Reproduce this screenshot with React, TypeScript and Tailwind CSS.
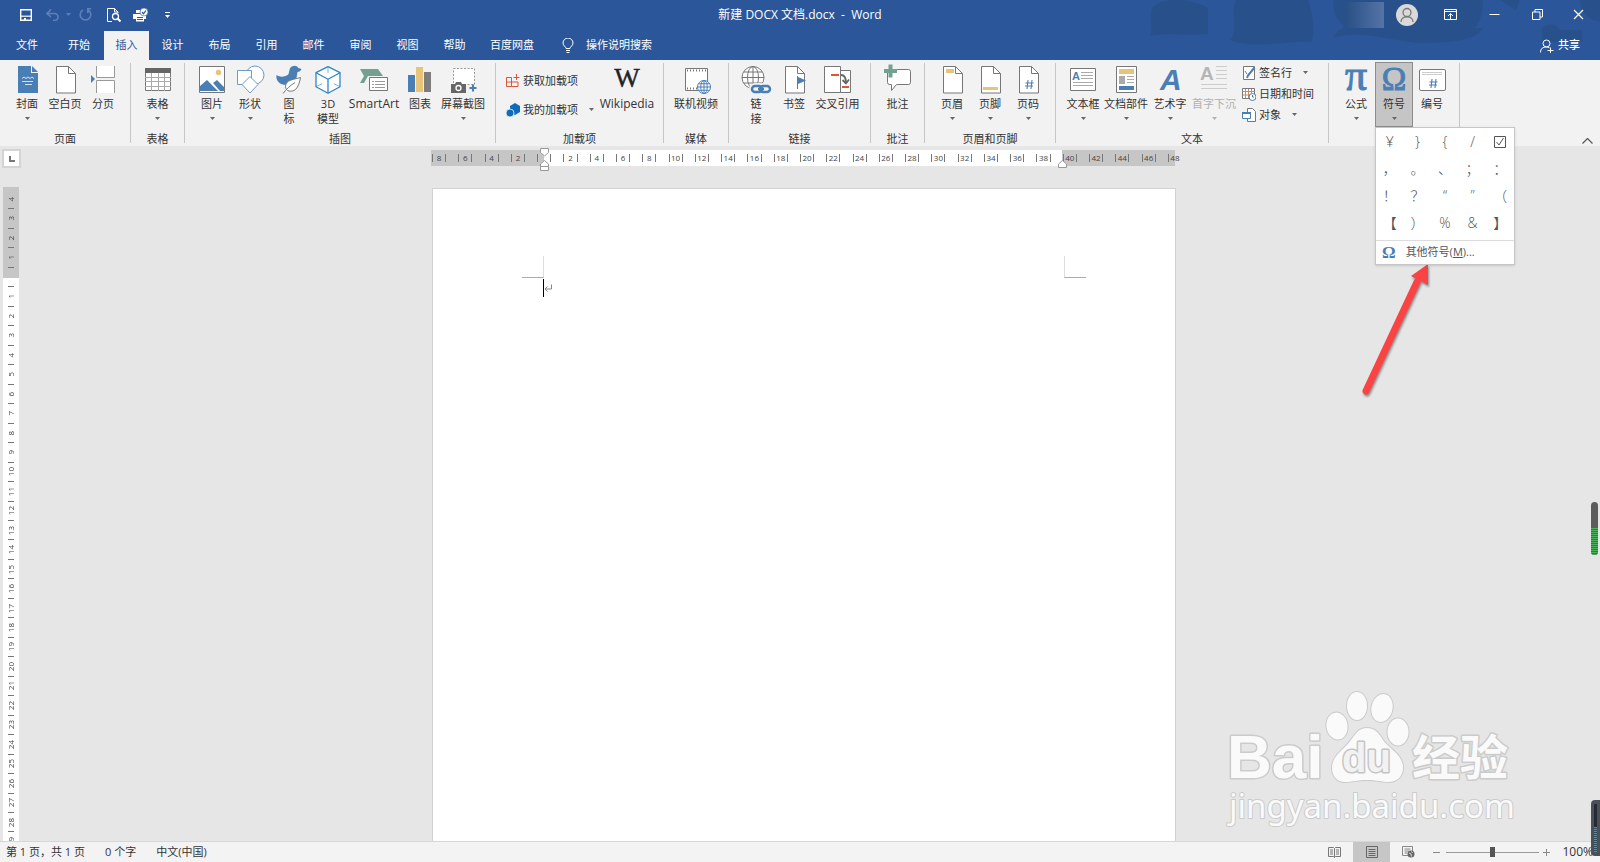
import type { ReactNode } from 'react'
import clsx from 'clsx'

const BLUE = '#4a7fb5'
const GRAY = '#777777'
const GOLD = '#e8c478'
const RED = '#d9563a'

const tabs = ['插入', '设计', '布局', '引用', '邮件', '审阅', '视图', '帮助']

const symbols = [
  '¥', '}', '{', '/', '☑',
  '，', '。', '、', '；', '：',
  '！', '？', '“', '”', '（',
  '【', '）', '%', '&', '】',
]

function Caret({ className }: { className?: string }) {
  return (
    <svg viewBox="0 0 5 3" className={clsx('h-[3px] w-[5px] shrink-0', className)}>
      <path d="M0 0h5L2.5 3z" fill="currentColor" />
    </svg>
  )
}

function Icon({ children }: { children: ReactNode }) {
  return (
    <svg viewBox="0 0 32 28" className="h-7 w-8 shrink-0 overflow-visible" fill="none">
      {children}
    </svg>
  )
}

function Sheet() {
  return (
    <>
      <path d="M7.5.5h12l7 7v19.500h-19z" fill="#fff" stroke={GRAY} />
      <path d="M19.5.5v7h7" stroke={GRAY} />
    </>
  )
}

function Globe({ x, y, r, color }: { x: number; y: number; r: number; color: string }) {
  return (
    <g stroke={color} transform={`translate(${x} ${y})`}>
      <circle r={r} fill="#fff" />
      <ellipse rx={r / 2} ry={r} />
      <path d={`M0 ${-r}V${r}M${-r} 0H${r}M${-r * 0.85} ${-r * 0.5}H${r * 0.85}M${-r * 0.85} ${r * 0.5}H${r * 0.85}`} />
    </g>
  )
}

const icons: Record<string, ReactNode> = {
  cover: (
    <>
      <path d="M7 0h13v7h7v20H7z" fill={BLUE} />
      <path d="M21 0l6 6h-6z" fill={BLUE} />
      <path d="M11 12.500l2-1.500 2 1.500 2-1.500 2 1.500 2-1.500 2 1.500" stroke="#fff" strokeWidth=".8" />
      <path d="M11 15.500h11M14 18.500h7" stroke="#cfe0ef" />
    </>
  ),
  blank: <Sheet />,
  pageBreak: (
    <>
      <path d="M9 0h19v11H9zM9 14h19v13H9z" fill="#fff" />
      <path d="M9.500 0v11.500h18V0M9.500 27V14.500h18V27" stroke="#999" />
      <path d="M4 9l4 4-4 4z" fill={BLUE} />
    </>
  ),
  table: (
    <>
      <path d="M3.500 2.500h25v22h-25z" fill="#fff" stroke={GRAY} />
      <path d="M3 2h26v5H3z" fill="#666" />
      <path d="M9.500 7v18M16.500 7v18M22.500 7v18M3 11.500h26M3 15.500h26M3 20.500h26" stroke="#aaa" />
    </>
  ),
  picture: (
    <>
      <path d="M3.500.5h25v26h-25z" fill="#fff" stroke={GRAY} />
      <circle cx="22.500" cy="6.500" r="2.700" fill={GOLD} />
      <path d="M4 25v-5l7-6 11 11zM17 17l4-3 7 7v4h-4z" fill={BLUE} />
    </>
  ),
  shapes: (
    <>
      <circle cx="21" cy="9" r="9" fill="#fff" stroke="#6c9bc9" />
      <path d="M3.500 4.500h14v14h-14z" fill="#fff" stroke="#6c9bc9" />
      <path d="M16 10.500l8 8-8 8.500-8-8.500z" fill="#fff" stroke="#6c9bc9" />
    </>
  ),
  icons: (
    <>
      <path d="M3.500 9c3 2 6 2 9 1 4-1 3-3 4-6a5 5 0 0 1 9-2l3 1c-1 2-2 3-4 3-1 4 0 13-11 13C7 19 2.500 15 3.500 9z" fill={BLUE} />
      <path d="M27.500 11.500c-6 2-15 2-15 9 0 5 6 6 10 3 3-3 4-7 5-12z" fill="#fff" stroke={GRAY} />
      <path d="M10 27.500c3-4 7-8 12-11" stroke={GRAY} />
    </>
  ),
  cube: (
    <g stroke="#2f86c6" strokeWidth="1.300" strokeLinejoin="round">
      <path d="M16 .7l12 6v14l-12 6.500-12-6.500v-14z" fill="#fff" />
      <path d="M4 6.700l12 6.500 12-6.500M16 13.200v14" />
      <path d="M16 1v6M4 20.700l6-3M28 20.700l-6-3" strokeWidth=".6" />
    </g>
  ),
  smartart: (
    <>
      <path d="M2 3h18l5 7H10l-4 7H2l4-7z" fill="#72a28f" />
      <path d="M11.500 11.500h18v13h-18z" fill="#fff" stroke={GRAY} />
      <path d="M14 15.500h2M17 15.500h10M14 18.500h2M17 18.500h10M14 21.500h2M17 21.500h10" stroke="#999" />
    </>
  ),
  chart: (
    <>
      <path d="M4 9h7v17H4z" fill={BLUE} />
      <path d="M12 1h7v25h-7z" fill={GOLD} />
      <path d="M20 6h7v20h-7z" fill="#7d7d7d" />
    </>
  ),
  screenshot: (
    <>
      <path d="M6.500 2.500h21v16h-21z" fill="#fff" stroke="#999" strokeDasharray="2 1.500" />
      <path d="M4 18h4l1-2h5l1 2h4v9H4z" fill="#666" />
      <circle cx="11.500" cy="22" r="2.500" stroke="#fff" strokeWidth="1.300" />
      <path d="M26 18.500v7M22.500 22h7" stroke={BLUE} strokeWidth="2" />
    </>
  ),
  video: (
    <>
      <path d="M5.500 2.500h22v22h-22z" fill="#fff" stroke={GRAY} />
      <path d="M7 4.500h20M7 22.500h11" stroke={GRAY} strokeWidth="2" strokeDasharray="1 2" />
      <Globe x={24} y={21} r={6.5} color={BLUE} />
    </>
  ),
  link: (
    <>
      <Globe x={13} y={11.5} r={11} color={GRAY} />
      <g stroke="#f2f2f2" strokeWidth="6">
        <rect x="12" y="20" width="10" height="6" rx="3" />
        <rect x="20" y="20" width="10" height="6" rx="3" />
      </g>
      <g stroke={BLUE} strokeWidth="2.500">
        <rect x="12" y="20" width="10" height="6" rx="3" />
        <rect x="20" y="20" width="10" height="6" rx="3" />
        <path d="M18 23h6" />
      </g>
    </>
  ),
  bookmark: (
    <>
      <Sheet />
      <path d="M19.500 10v13" stroke={BLUE} />
      <path d="M20 11l8 3.500-8 3.500z" fill={BLUE} />
    </>
  ),
  crossRef: (
    <>
      <path d="M13.500 4.500h15v22h-15z" fill="#fff" stroke={GRAY} />
      <path d="M2.500.5h16v26h-16z" fill="#fff" stroke={GRAY} />
      <path d="M9 9h8M20 21h7" stroke={RED} strokeWidth="2" />
      <path d="M19 9c4 0 5 3 5 8M20.500 14l3.500 3.500 3-4" stroke="#666" strokeWidth="1.800" />
    </>
  ),
  comment: (
    <>
      <path d="M6.500 3.500h20q2 0 2 2v11q0 2-2 2h-12l-5 6v-6h-2q-2 0-2-2v-11z" fill="#fff" stroke={GRAY} />
      <path d="M8.500-1.500v13M2 5h13" stroke="#72a28f" strokeWidth="4" />
    </>
  ),
  header: (
    <>
      <Sheet />
      <path d="M10 3h8v4h-8z" fill={GOLD} />
    </>
  ),
  footer: (
    <>
      <Sheet />
      <path d="M9 21h15v3H9z" fill={GOLD} />
    </>
  ),
  pageNumber: (
    <>
      <Sheet />
      <path d="M16 14l-1 9M20 14l-1 9M13.500 17h8M13 20h8" stroke={BLUE} strokeWidth="1.100" />
    </>
  ),
  textBox: (
    <>
      <path d="M3.500 2.500h25v22h-25z" fill="#fff" stroke={GRAY} />
      <text x="5" y="14" fontSize="11" fontWeight="700" fill={BLUE} fontFamily="Liberation Sans">A</text>
      <path d="M14 6.500h12M14 9.500h12M14 12.500h12M6 16.500h20M6 19.500h20" stroke="#aaa" />
    </>
  ),
  quickParts: (
    <>
      <path d="M6.500.5h20v26h-20z" fill="#fff" stroke={GRAY} />
      <path d="M9 3h15v5H9z" fill={GOLD} />
      <path d="M9 10h6v8H9z" fill="#aaa" />
      <path d="M17 10.500h7M17 13.500h7M17 16.500h7" stroke="#aaa" />
      <path d="M9 20h15v4H9z" fill={BLUE} />
    </>
  ),
  wordArt: (
    <text x="6" y="24" fontSize="30" fontWeight="700" fontStyle="italic" fill={BLUE} fontFamily="Liberation Sans">A</text>
  ),
  dropCap: (
    <>
      <text x="2" y="14" fontSize="19" fontWeight="700" fill="#b5b5b5" fontFamily="Liberation Sans">A</text>
      <path d="M18 .5h11M18 4.500h11M18 8.500h11M18 12.500h11M3 18.500h26M3 22.500h26" stroke="#ccc" />
    </>
  ),
  equation: (
    <text x="16" y="24" fontSize="44" textAnchor="middle" fill={BLUE} stroke={BLUE} strokeWidth="1" fontFamily="Liberation Serif">π</text>
  ),
  omega: (
    <text x="16" y="24" fontSize="33" textAnchor="middle" fill={BLUE} stroke={BLUE} strokeWidth="1" fontFamily="Liberation Serif">Ω</text>
  ),
  number: (
    <>
      <rect x="3.500" y="3.500" width="26" height="21" rx="1.500" fill="#fff" stroke={GRAY} />
      <path d="M6 6.500h20M6 8.500h20" stroke="#ccc" />
      <path d="M16 13l-1 9M20 13l-1 9M13.500 16h8M13 19h8" stroke={BLUE} strokeWidth="1.100" />
    </>
  ),
  wikipedia: (
    <text x="16" y="21" fontSize="27" textAnchor="middle" fill="#222" stroke="#222" strokeWidth=".4" fontFamily="Liberation Serif">W</text>
  ),
}

type ToolProps = {
  icon: string
  label: string
  width: string
  menu?: boolean
  disabled?: boolean
  active?: boolean
}

function Tool({ icon, label, width, menu, disabled, active }: ToolProps) {
  const latin = /^[A-Za-z]+$/.test(label)
  return (
    <button
      type="button"
      disabled={disabled}
      className={clsx(
        'flex h-[65px] flex-col items-center pt-1',
        width,
        active && 'bg-[#c5c5c5] outline -outline-offset-1 outline-[#8c8c8c]',
        disabled ? 'text-[#b1b1b1]' : 'text-[#333]',
      )}
    >
      <Icon>{icons[icon]}</Icon>
      <span className={clsx('mt-0.5 whitespace-pre leading-[15px]', latin ? 'text-[12px]' : 'text-[11px]')}>{label}</span>
      {menu && <Caret className={clsx('mt-1.5', !disabled && 'text-[#666]')} />}
    </button>
  )
}

function Group({ label, children }: { label: string; children: ReactNode }) {
  return (
    <>
      <section aria-label={label || '符号'} className="flex flex-col px-2 pt-0.5">
        <div className="flex">{children}</div>
        <div className="mt-1 text-center text-[11px] leading-[15px] text-[#333]">{label}</div>
      </section>
      <div className="my-[3px] w-px shrink-0 bg-[#c6c6c6]" />
    </>
  )
}

function SmallTool({ icon, label, menu }: { icon: ReactNode; label: string; menu?: boolean }) {
  return (
    <button type="button" className="flex items-center gap-[3px] pl-0.5 text-[11px] leading-[15px] whitespace-nowrap text-[#333]">
      <svg viewBox="0 0 14 14" className="size-3.5 shrink-0" fill="none">
        {icon}
      </svg>
      {label}
      {menu && <Caret className="ml-2 text-[#666]" />}
    </button>
  )
}

function SymbolMenu() {
  return (
    <div className="absolute top-[65px] left-0 z-20 w-[140px] border border-[#c6c6c6] bg-white shadow-sm">
      <div className="grid grid-cols-5 pb-1">
        {symbols.map((s) => (
          <button
            key={s}
            type="button"
            className="flex h-[27px] items-center justify-center font-['Open_Sans','Noto_Sans_CJK_SC',sans-serif] text-[14px] font-light text-[#555]"
          >
            {s === '☑' ? (
              <svg viewBox="0 0 12 12" className="size-3" fill="none" stroke="#555">
                <path d="M.5.5h11v11H.5z" />
                <path d="M2.500 6l2.500 3 4.500-7" />
              </svg>
            ) : (
              s
            )}
          </button>
        ))}
      </div>
      <button type="button" className="flex h-6 w-full items-center gap-2.5 border-t border-[#dcdcdc] pl-1.5 text-[11px] text-[#555]">
        <span className="font-['Liberation_Serif',serif] text-[17px] leading-none font-bold text-[#4a7fb5]">Ω</span>
        <span>其他符号(<u>M</u>)...</span>
      </button>
    </div>
  )
}

function TitleBar() {
  return (
    <div className="relative grid h-[31px] grid-cols-[1fr_auto_1fr] items-center pb-0.5 text-white">
      <div className="flex items-center pl-5">
        <button type="button" aria-label="保存" className="mr-3.5">
          <svg viewBox="0 0 12 12" className="size-3" fill="none" stroke="#fff" strokeWidth="1.400">
            <path d="M.7.7h10.600v10.600H.7z" />
            <path d="M1 7.200h10" strokeWidth="1.200" />
            <path d="M5 11V9" strokeWidth="2" />
          </svg>
        </button>
        <button type="button" aria-label="撤消" className="mr-2 flex items-center gap-1.5 text-[#5c80b8]">
          <svg viewBox="0 0 14 12" className="h-3 w-3.5" fill="none" stroke="currentColor" strokeWidth="1.600">
            <path d="M5 .5L1 4.500l4 3.500M1 4.500h7.500a3.300 3.300 0 0 1 0 7H7" />
          </svg>
          <Caret />
        </button>
        <button type="button" aria-label="重复" className="mr-[15px] text-[#5c80b8]">
          <svg viewBox="0 0 13 13" className="size-[13px]" fill="none" stroke="currentColor" strokeWidth="1.600">
            <path d="M9 2a5.300 5.300 0 1 1-5 0M8 .8h4.200M8.800 1v4" />
          </svg>
        </button>
        <button type="button" aria-label="打印预览" className="mr-3">
          <svg viewBox="0 0 14 14" className="size-3.5" fill="none" stroke="#fff">
            <path d="M5 13.500H.5V.5h7l3.500 3.500v1M7.500.5v3.500H11" />
            <circle cx="8.500" cy="8.500" r="3" strokeWidth="1.300" />
            <path d="M10.500 10.500l3 3" strokeWidth="2" />
          </svg>
        </button>
        <button type="button" aria-label="快速打印" className="mr-[17px]">
          <svg viewBox="0 0 15 14" className="h-3.5 w-[15px]" fill="none">
            <path d="M0 6h13v5h-2v2.500H3V11H0zM3 2h4v3H3z" fill="#fff" />
            <path d="M4 9.500h6M4 11.500h6" stroke="#2b579a" />
            <circle cx="11" cy="4" r="4" fill="#fff" stroke="#2b579a" strokeWidth=".6" />
            <path d="M9 4l1.500 1.700L13 2.500" stroke="#2b579a" strokeWidth="1.200" />
          </svg>
        </button>
        <button type="button" aria-label="自定义快速访问工具栏" className="flex flex-col items-center gap-0.5">
          <span className="h-px w-[5px] bg-white" />
          <Caret />
        </button>
      </div>
      <h1 className="text-[12px] whitespace-pre">{'新建 DOCX 文档.docx  -  Word'}</h1>
      <div className="flex items-center justify-end">
        <div className="mr-3 h-[26px] w-[38px] bg-linear-to-r from-[#2a5087] to-[#5474a6]" />
        <button type="button" aria-label="帐户" className="mr-6 rounded-full bg-[#d9d9d9]">
          <svg viewBox="0 0 22 22" className="size-[22px]" fill="none" stroke="#777" strokeWidth="1.300">
            <circle cx="11" cy="8.500" r="4" />
            <path d="M5 18c0-7 12-7 12 0" />
          </svg>
        </button>
        <button type="button" aria-label="功能区显示选项" className="flex w-[45px] pl-0.5">
          <svg viewBox="0 0 13 11" className="h-[11px] w-[13px]" fill="none" stroke="#fff">
            <path d="M.5.5h12v10H.5zM.5 2.500h12M6.500 10V4.500M4 7l2.500-2.500L9 7" />
          </svg>
        </button>
        <button type="button" aria-label="最小化" className="flex w-[43px] pl-0.5">
          <svg viewBox="0 0 11 11" className="size-[11px]" stroke="#fff">
            <path d="M.5 5.500h10" />
          </svg>
        </button>
        <button type="button" aria-label="还原" className="flex w-[43px] pl-0.5">
          <svg viewBox="0 0 11 11" className="size-[11px]" fill="none" stroke="#fff">
            <path d="M.5 3h7.500v7.500H.5zM3 3V.5h7.500V8H8" />
          </svg>
        </button>
        <button type="button" aria-label="关闭" className="mr-4 flex">
          <svg viewBox="0 0 11 11" className="size-[11px]" stroke="#fff" strokeWidth="1.200">
            <path d="M1 1l9 9M10 1l-9 9" />
          </svg>
        </button>
      </div>
    </div>
  )
}

function TabRow() {
  return (
    <nav className="relative flex h-[29px] items-stretch text-[11px] text-white">
      <button type="button" className="w-[54px]">文件</button>
      <button type="button" className="w-[50px]">开始</button>
      {tabs.map((tab, i) => (
        <button key={tab} type="button" className={clsx(i === 0 ? 'w-[45px] bg-[#f2f2f2] text-[#2b579a]' : 'w-[47px]')}>
          {tab}
        </button>
      ))}
      <button type="button" className="w-[68px]">百度网盘</button>
      <label className="ml-4 flex items-center gap-3">
        <svg viewBox="0 0 12 15" className="h-[15px] w-3" fill="none" stroke="#fff" role="img" aria-label="操作说明搜索">
          <path d="M4 10.500C4 8.500 1 8 1 5a5 5 0 0 1 10 0c0 3-3 3.500-3 5.500zM4 12.500h4M4.500 14.500h3" />
        </svg>
        <input type="text" placeholder="操作说明搜索" className="w-32 bg-transparent outline-none placeholder:text-white" />
      </label>
      <button type="button" className="mr-5 ml-auto flex items-center gap-1 font-medium">
        <svg viewBox="0 0 14 14" className="size-3.5" fill="none" stroke="#fff">
          <circle cx="6.500" cy="4.500" r="3.500" />
          <path d="M.5 13.500c0-4 2.500-5.500 6-5.500 1 0 2 .2 3 .8M7.500 11.500h6M10.500 8.500v5.500" />
        </svg>
        共享
      </button>
    </nav>
  )
}

function Ribbon() {
  return (
    <div className="relative z-10 flex h-[86px] bg-[#f2f2f2]">
      <Group label="页面">
        <Tool icon="cover" label="封面" width="w-[38px]" menu />
        <Tool icon="blank" label="空白页" width="w-[38px]" />
        <Tool icon="pageBreak" label="分页" width="w-[38px]" />
      </Group>
      <Group label="表格">
        <Tool icon="table" label="表格" width="w-[37px]" menu />
      </Group>
      <Group label="插图">
        <Tool icon="picture" label="图片" width="w-[38px]" menu />
        <Tool icon="shapes" label="形状" width="w-[38px]" menu />
        <Tool icon="icons" label={'图\n标'} width="w-[40px]" />
        <Tool icon="cube" label={'3D\n模型'} width="w-[38px]" />
        <Tool icon="smartart" label="SmartArt" width="w-[54px]" />
        <Tool icon="chart" label="图表" width="w-[38px]" />
        <Tool icon="screenshot" label="屏幕截图" width="w-[48px]" menu />
      </Group>
      <Group label="加载项">
        <div className="flex w-[95px] flex-col gap-3.5 pt-[11px]">
          <SmallTool
            label="获取加载项"
            icon={<path d="M.5 3.500h5v9h-5zM5.500 8h6.500v4.500H5.500M.5 8h5M10.500 0v6M7.500 3.500h6" stroke={RED} />}
          />
          <SmallTool
            label="我的加载项"
            menu
            icon={
              <>
                <path d="M4 3l5-3 5 3v6l-5 3-5-3z" fill="#0f6cbd" />
                <circle cx="4" cy="10" r="4" fill="#0f6cbd" stroke="#f2f2f2" strokeWidth=".8" />
              </>
            }
          />
        </div>
        <Tool icon="wikipedia" label="Wikipedia" width="w-[56px]" />
      </Group>
      <Group label="媒体">
        <Tool icon="video" label="联机视频" width="w-[48px]" />
      </Group>
      <Group label="链接">
        <Tool icon="link" label={'链\n接'} width="w-[38px]" />
        <Tool icon="bookmark" label="书签" width="w-[38px]" />
        <Tool icon="crossRef" label="交叉引用" width="w-[49px]" />
      </Group>
      <Group label="批注">
        <Tool icon="comment" label="批注" width="w-[37px]" />
      </Group>
      <Group label="页眉和页脚">
        <Tool icon="header" label="页眉" width="w-[38px]" menu />
        <Tool icon="footer" label="页脚" width="w-[38px]" menu />
        <Tool icon="pageNumber" label="页码" width="w-[38px]" menu />
      </Group>
      <Group label="文本">
        <Tool icon="textBox" label="文本框" width="w-[38px]" menu />
        <Tool icon="quickParts" label="文档部件" width="w-[48px]" menu />
        <Tool icon="wordArt" label="艺术字" width="w-[40px]" menu />
        <Tool icon="dropCap" label="首字下沉" width="w-[48px]" menu disabled />
        <div className="flex w-[82px] flex-col gap-1.5 pt-[3px] pl-0.5">
          <SmallTool
            label="签名行"
            menu
            icon={
              <>
                <path d="M1.500.5h11v13h-11z" fill="#fff" stroke={GRAY} />
                <path d="M12.500 1.500L6 9.500 5 12" stroke={BLUE} strokeWidth="2" />
                <path d="M3 5l2 3" stroke={GRAY} />
              </>
            }
          />
          <SmallTool
            label="日期和时间"
            icon={
              <>
                <path d="M.5 1.500h12v10H.5z" fill="#fff" stroke={GRAY} />
                <path d="M.5 4.500h12M.5 8h8M3.500 2v9M6.500 2v9M9.500 2v4" stroke="#c98b62" />
                <circle cx="10.500" cy="10" r="3.500" fill="#fff" stroke={BLUE} />
                <path d="M10.500 8v2H12" stroke={BLUE} />
              </>
            }
          />
          <SmallTool
            label="对象"
            menu
            icon={
              <>
                <path d="M5.500.5h5l3 3v10h-8z" fill="#fff" stroke={GRAY} />
                <path d="M.5 4.500h8v6h-8z" fill="#fff" stroke={BLUE} />
                <path d="M0 5h9" stroke={BLUE} strokeWidth="2" />
              </>
            }
          />
        </div>
      </Group>
      <Group label="">
        <Tool icon="equation" label="公式" width="w-[38px]" menu />
        <div className="relative">
          <Tool icon="omega" label="符号" width="w-[38px]" menu active />
          <SymbolMenu />
        </div>
        <Tool icon="number" label="编号" width="w-[38px]" />
      </Group>
      <button type="button" aria-label="折叠功能区" className="mt-auto mr-[7px] mb-0.5 ml-auto">
        <svg viewBox="0 0 11 6" className="h-1.5 w-[11px]" fill="none" stroke="#555" strokeWidth="1.200">
          <path d="M.5 5.500l5-5 5 5" />
        </svg>
      </button>
    </div>
  )
}

function HorizontalRuler() {
  return (
    <div className="relative mt-1 h-4 w-[744px] bg-[linear-gradient(to_right,#c6c6c6_113px,#fff_113px,#fff_631px,#c6c6c6_631px)]">
      <div className="ml-px flex h-4 w-[749px] items-center text-[8px] leading-[8px] text-[#444]">
        {Array.from({ length: 57 }, (_, i) => Math.abs(i - 8)).map((n, i) => (
          <div key={i} className="flex h-2 flex-1 justify-center border-l border-[#777]">
            {n > 0 && n % 2 === 0 ? n : ''}
          </div>
        ))}
      </div>
      <svg viewBox="0 0 9 24" className="absolute -top-0.5 left-[109px] h-6 w-[9px]" fill="#fff" stroke="#999">
        <path d="M.5.5h8v4l-4 3.500-4-3.500zM.5 18.500V16l4-3.500L8.500 16v2.500zM.5 18.500h8v4h-8z" />
      </svg>
      <svg viewBox="0 0 9 8" className="absolute top-2.5 left-[627px] h-2 w-[9px]" fill="#fff" stroke="#999">
        <path d="M.5 7.500V4l4-3.500L8.500 4v3.500z" />
      </svg>
    </div>
  )
}

function VerticalRuler() {
  return (
    <div className="flex w-5 shrink-0 flex-col pl-0.5">
      <button type="button" aria-label="制表符" className="mt-[3px] flex size-[19px] shrink-0 items-center justify-center border-2 border-[#d4d4d4] bg-white">
        <svg viewBox="0 0 6 6" className="size-1.5" stroke="#777" strokeWidth="2" fill="none">
          <path d="M1 0v5h5" />
        </svg>
      </button>
      <div className="mt-[19px] ml-px min-h-0 w-4 flex-1 overflow-hidden bg-[linear-gradient(to_bottom,#c6c6c6_91px,#fff_91px)]">
        <div className="mt-[3px] flex h-[661px] flex-col items-center text-[8px] leading-[8px] text-[#444]">
          {Array.from({ length: 34 }, (_, i) => Math.abs(i - 4)).map((n, i) => (
            <div key={i} className={clsx('flex w-1.5 flex-1 items-center justify-center', i > 0 && 'border-t border-[#777]')}>
              <span className="rotate-180 [writing-mode:vertical-rl]">{n || ''}</span>
            </div>
          ))}
        </div>
      </div>
    </div>
  )
}

function Watermark() {
  return (
    <svg viewBox="0 0 300 140" className="absolute right-[80px] bottom-3 h-[140px] w-[300px]" fill="#fafafa" stroke="#cbcbcb" strokeWidth="3" strokeLinejoin="round" style={{ paintOrder: 'stroke' }}>
      <text x="7" y="89" fontSize="62" fontWeight="700" fontFamily="Liberation Sans">Bai</text>
      <g strokeWidth="2" transform="translate(0 -1)">
        <ellipse cx="117" cy="38" rx="10.500" ry="13.500" transform="rotate(-8 117 38)" />
        <ellipse cx="137" cy="18" rx="10" ry="14" />
        <ellipse cx="162" cy="20" rx="10.500" ry="14" transform="rotate(12 162 20)" />
        <ellipse cx="178" cy="44" rx="10.500" ry="13.500" />
        <path d="M147 40c8 0 12 5 16 12 6 9 20 14 20 28 0 9-7 14-14 14-8 0-12-2-22-2s-14 2-22 2c-8 0-13-6-13-14 0-13 13-19 19-28 5-7 8-12 16-12z" />
      </g>
      <text x="122" y="83" fontSize="40" fontFamily="Liberation Sans" fontWeight="700" fill="#f2f2f2" stroke="#c4c4c4">du</text>
      <text x="192" y="86" fontSize="48" fontWeight="700" fontFamily="Noto Sans CJK SC">经验</text>
      <text x="9" y="129" fontSize="33" fontFamily="Noto Sans" strokeWidth="2">jingyan.baidu.com</text>
    </svg>
  )
}

function StatusBar() {
  return (
    <footer className="flex h-[21px] shrink-0 items-center border-t border-[#d6d6d6] bg-[#f3f3f3] pl-1.5 text-[11px] text-[#333]">
      <span>第 1 页，共 1 页</span>
      <span className="ml-5">0 个字</span>
      <span className="ml-5">中文(中国)</span>
      <button type="button" aria-label="阅读视图" className="ml-auto flex w-[37px] justify-center">
        <svg viewBox="0 0 13 11" className="h-[11px] w-[13px]" fill="none" stroke="#777">
          <path d="M.5.5h5l1 1 1-1h5v9h-5l-1 1-1-1h-5zM6.500 1.500v9M2 3h3M2 5h3M2 7h3M8 3h3M8 5h3M8 7h3" />
        </svg>
      </button>
      <button type="button" aria-label="页面视图" className="flex h-full w-[37px] items-center justify-center bg-[#c6c6c6]">
        <svg viewBox="0 0 12 12" className="size-3" fill="none" stroke="#666">
          <path d="M.5.5h11v11H.5zM2.500 3.500h7M2.500 5.500h7M2.500 7.500h7M2.500 9.500h7" />
        </svg>
      </button>
      <button type="button" aria-label="Web 版式视图" className="mr-1.5 flex w-[37px] justify-center">
        <svg viewBox="0 0 13 12" className="h-3 w-[13px]" fill="none" stroke="#888">
          <path d="M7 9.500H.5V.5h10V5M2.500 3h6M2.500 5h5M2.500 7h3" />
          <circle cx="9" cy="8" r="3.500" fill="#666" stroke="none" />
          <path d="M7 7l2 1 .5 2.500M9.500 5.500l1 1.500" stroke="#ddd" />
        </svg>
      </button>
      <button type="button" aria-label="缩小" className="mr-1.5 h-px w-[7px] bg-[#888]" />
      <input
        type="range"
        aria-label="显示比例"
        min={0}
        max={200}
        defaultValue={100}
        className="h-3 w-[93px] appearance-none bg-[linear-gradient(#999,#999)] bg-[length:100%_1px] bg-center bg-no-repeat [&::-webkit-slider-thumb]:h-2.5 [&::-webkit-slider-thumb]:w-[5px] [&::-webkit-slider-thumb]:appearance-none [&::-webkit-slider-thumb]:bg-[#555]"
      />
      <button type="button" aria-label="放大" className="ml-1">
        <svg viewBox="0 0 7 7" className="size-[7px]" stroke="#888">
          <path d="M0 3.500h7M3.500 0v7" />
        </svg>
      </button>
      <span className="mr-[7px] ml-3 text-[12px]">100%</span>
    </footer>
  )
}

export default function App() {
  return (
    <div className="relative flex h-screen flex-col overflow-hidden bg-[#e6e6e6] font-['Open_Sans','Noto_Sans_CJK_SC',sans-serif]">
      <header className="relative shrink-0 bg-[#2b579a]">
        <svg viewBox="0 0 480 60" className="absolute top-0 right-0 h-[60px] w-[480px]" fill="#284f86" opacity=".7">
          <path d="M32 8c10-12 40-10 56 0v26c-20 2-40-2-58 2 4-8-2-16 2-28z" />
          <path d="M116 0h72c6 14 6 30 4 42-20-2-60 8-82-2 8-10 0-24 6-40z" />
          <path d="M213 0h150c0 12-2 20-8 28h8c-6 14-40 15-64 15-26-1-56-14-86-5 4-8 8-8 11-12-10-8-11-16-11-26z" />
          <path d="M422 28c6-6 16-4 18 2h22v12h-40z" />
          <path d="M380 0h20l-4 10zM460 0h20v22c-12-2-20-10-20-22z" />
        </svg>
        <TitleBar />
        <TabRow />
      </header>
      <Ribbon />
      <main className="relative flex min-h-0 flex-1 bg-[#e6e6e6]">
        <VerticalRuler />
        <div className="flex min-w-0 flex-1 flex-col items-center pr-3.5">
          <HorizontalRuler />
          <article className="mt-[22px] ml-0.5 w-[744px] flex-1 border-x border-t border-[#d2d2d2] bg-white pt-[67px]">
            <div className="flex justify-between px-[89px]">
              <div className="size-[22px] border-r border-b border-r-[#ddd] border-b-[#aaa]" />
              <div className="size-[22px] border-b border-l border-b-[#aaa] border-l-[#ddd]" />
            </div>
            <p className="mt-px ml-[110px] flex h-[18px] items-center border-l border-black">
              <svg viewBox="0 0 8 7" className="size-2" fill="none" stroke="#888">
                <path d="M7.500 0v4.500H1M3.500 2L1 4.500 3.500 7" />
              </svg>
            </p>
          </article>
        </div>
        <svg viewBox="0 0 72 140" className="absolute top-[115px] right-[168px] h-[140px] w-[72px] drop-shadow-[1px_2px_1px_#0006]">
          <path d="M6 130L57 21" stroke="#fa4444" strokeWidth="7" strokeLinecap="round" />
          <path d="M68 3v21L51 15z" fill="#fa4444" />
        </svg>
        <Watermark />
        <div className="absolute top-[356px] right-0.5 h-[53px] w-[7px] overflow-hidden rounded-sm bg-[#5c5c5c]">
          <div className="mt-[26px] h-[27px] bg-[repeating-linear-gradient(#4cb05e_0_1px,#4b6b50_1px_2px)]" />
        </div>
      </main>
      <StatusBar />
      <div className="absolute right-0 bottom-1.5 z-20 h-14 w-[9px] rounded-l-sm bg-[#4a5058] p-[3px] pt-1">
        <div className="h-[23px] w-[3px] bg-[#252a35]" />
        <div className="h-[25px] w-[3px] bg-[repeating-linear-gradient(#4596b0_0_1px,#2b4a5a_1px_2px)]" />
      </div>
    </div>
  )
}
